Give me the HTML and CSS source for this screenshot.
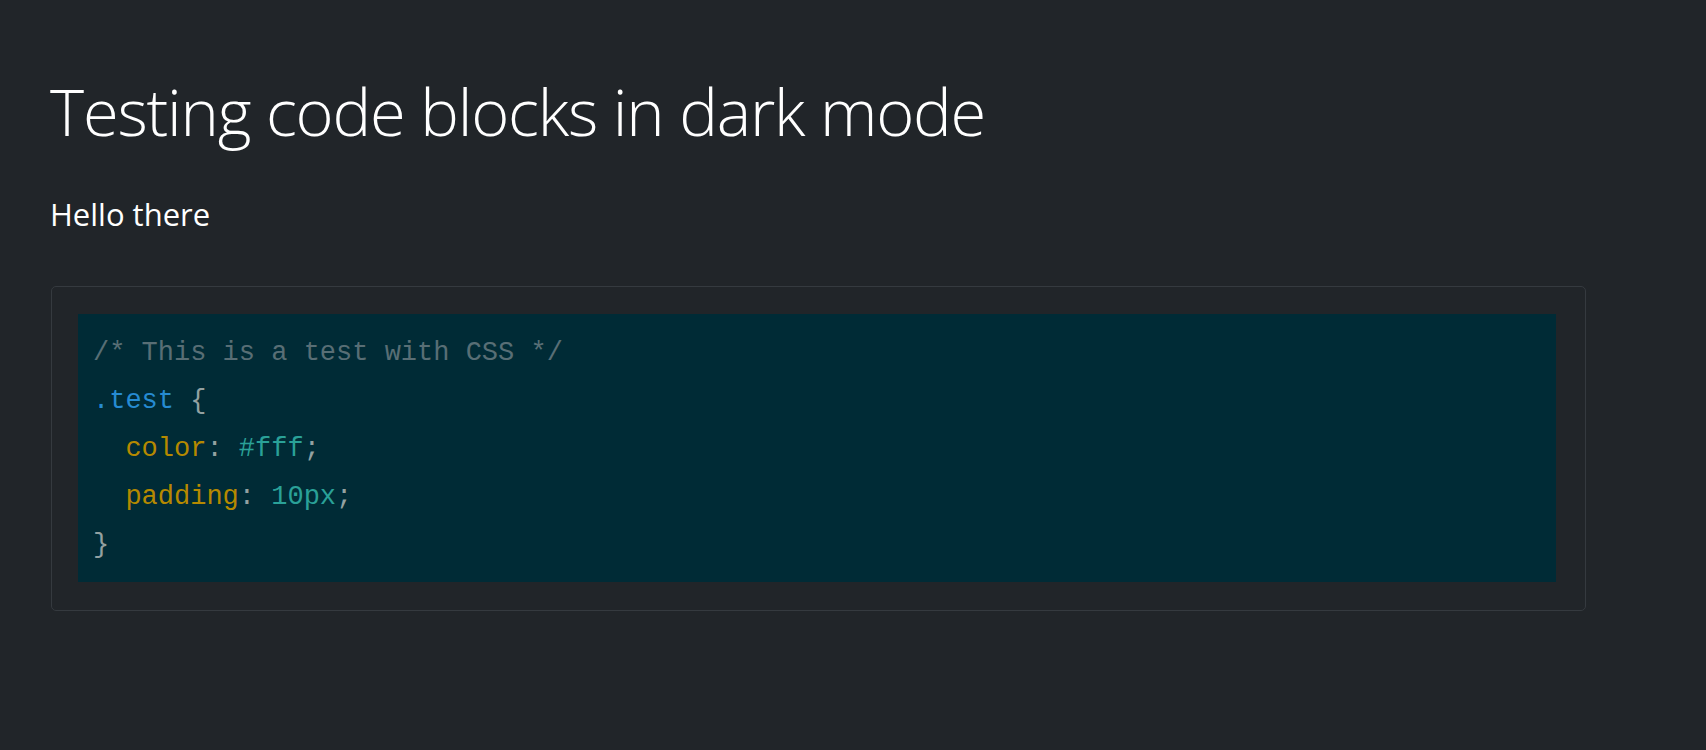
FILE: index.html
```html
<!DOCTYPE html>
<html lang="en">
<head>
<meta charset="utf-8">
<title>Testing code blocks in dark mode</title>
<link rel="stylesheet" href="styles.css">
</head>
<body>
<main class="page">
  <h1 class="title">Testing code blocks in dark mode</h1>
  <p class="lead">Hello there</p>
  <div class="code-box">
<pre class="code"><code><span class="c">/* This is a test with CSS */</span>
<span class="s">.test</span> <span class="p">{</span>
  <span class="k">color</span><span class="p">:</span> <span class="v">#fff</span><span class="p">;</span>
  <span class="k">padding</span><span class="p">:</span> <span class="v">10px</span><span class="p">;</span>
<span class="p">}</span></code></pre>
  </div>
</main>
</body>
</html>
```

FILE: styles.css
```css
html, body {
  margin: 0;
  padding: 0;
  background: #212529;
}

body {
  font-family: "Open Sans", "Noto Sans", sans-serif;
  color: #ffffff;
}

.page {
  padding: 71px 50px 0 50px;
}

.title {
  margin: 0;
  font-size: 65px;
  font-weight: 300;
  line-height: 80px;
  letter-spacing: -1.2px;
}

.lead {
  margin: 43px 0 0 0;
  font-size: 31px;
  font-weight: 400;
  line-height: 40px;
}

.code-box {
  margin-top: 52px;
  margin-left: 1px;
  width: 1478px;
  padding: 27px 29px 28px 26px;
  border: 1px solid #353a3f;
  border-radius: 5px;
}

.code {
  margin: 0;
  padding: 15px 15px 13px 15px;
  background: #002b36;
  font-family: "Liberation Mono", "Courier New", monospace;
  font-size: 27px;
  line-height: 48px;
  color: #93a1a1;
}

.code code {
  font-family: inherit;
}

.c { color: #586e75; }
.s { color: #268bd2; }
.k { color: #b58900; }
.v { color: #2aa198; }
.p { color: #93a1a1; }
```
